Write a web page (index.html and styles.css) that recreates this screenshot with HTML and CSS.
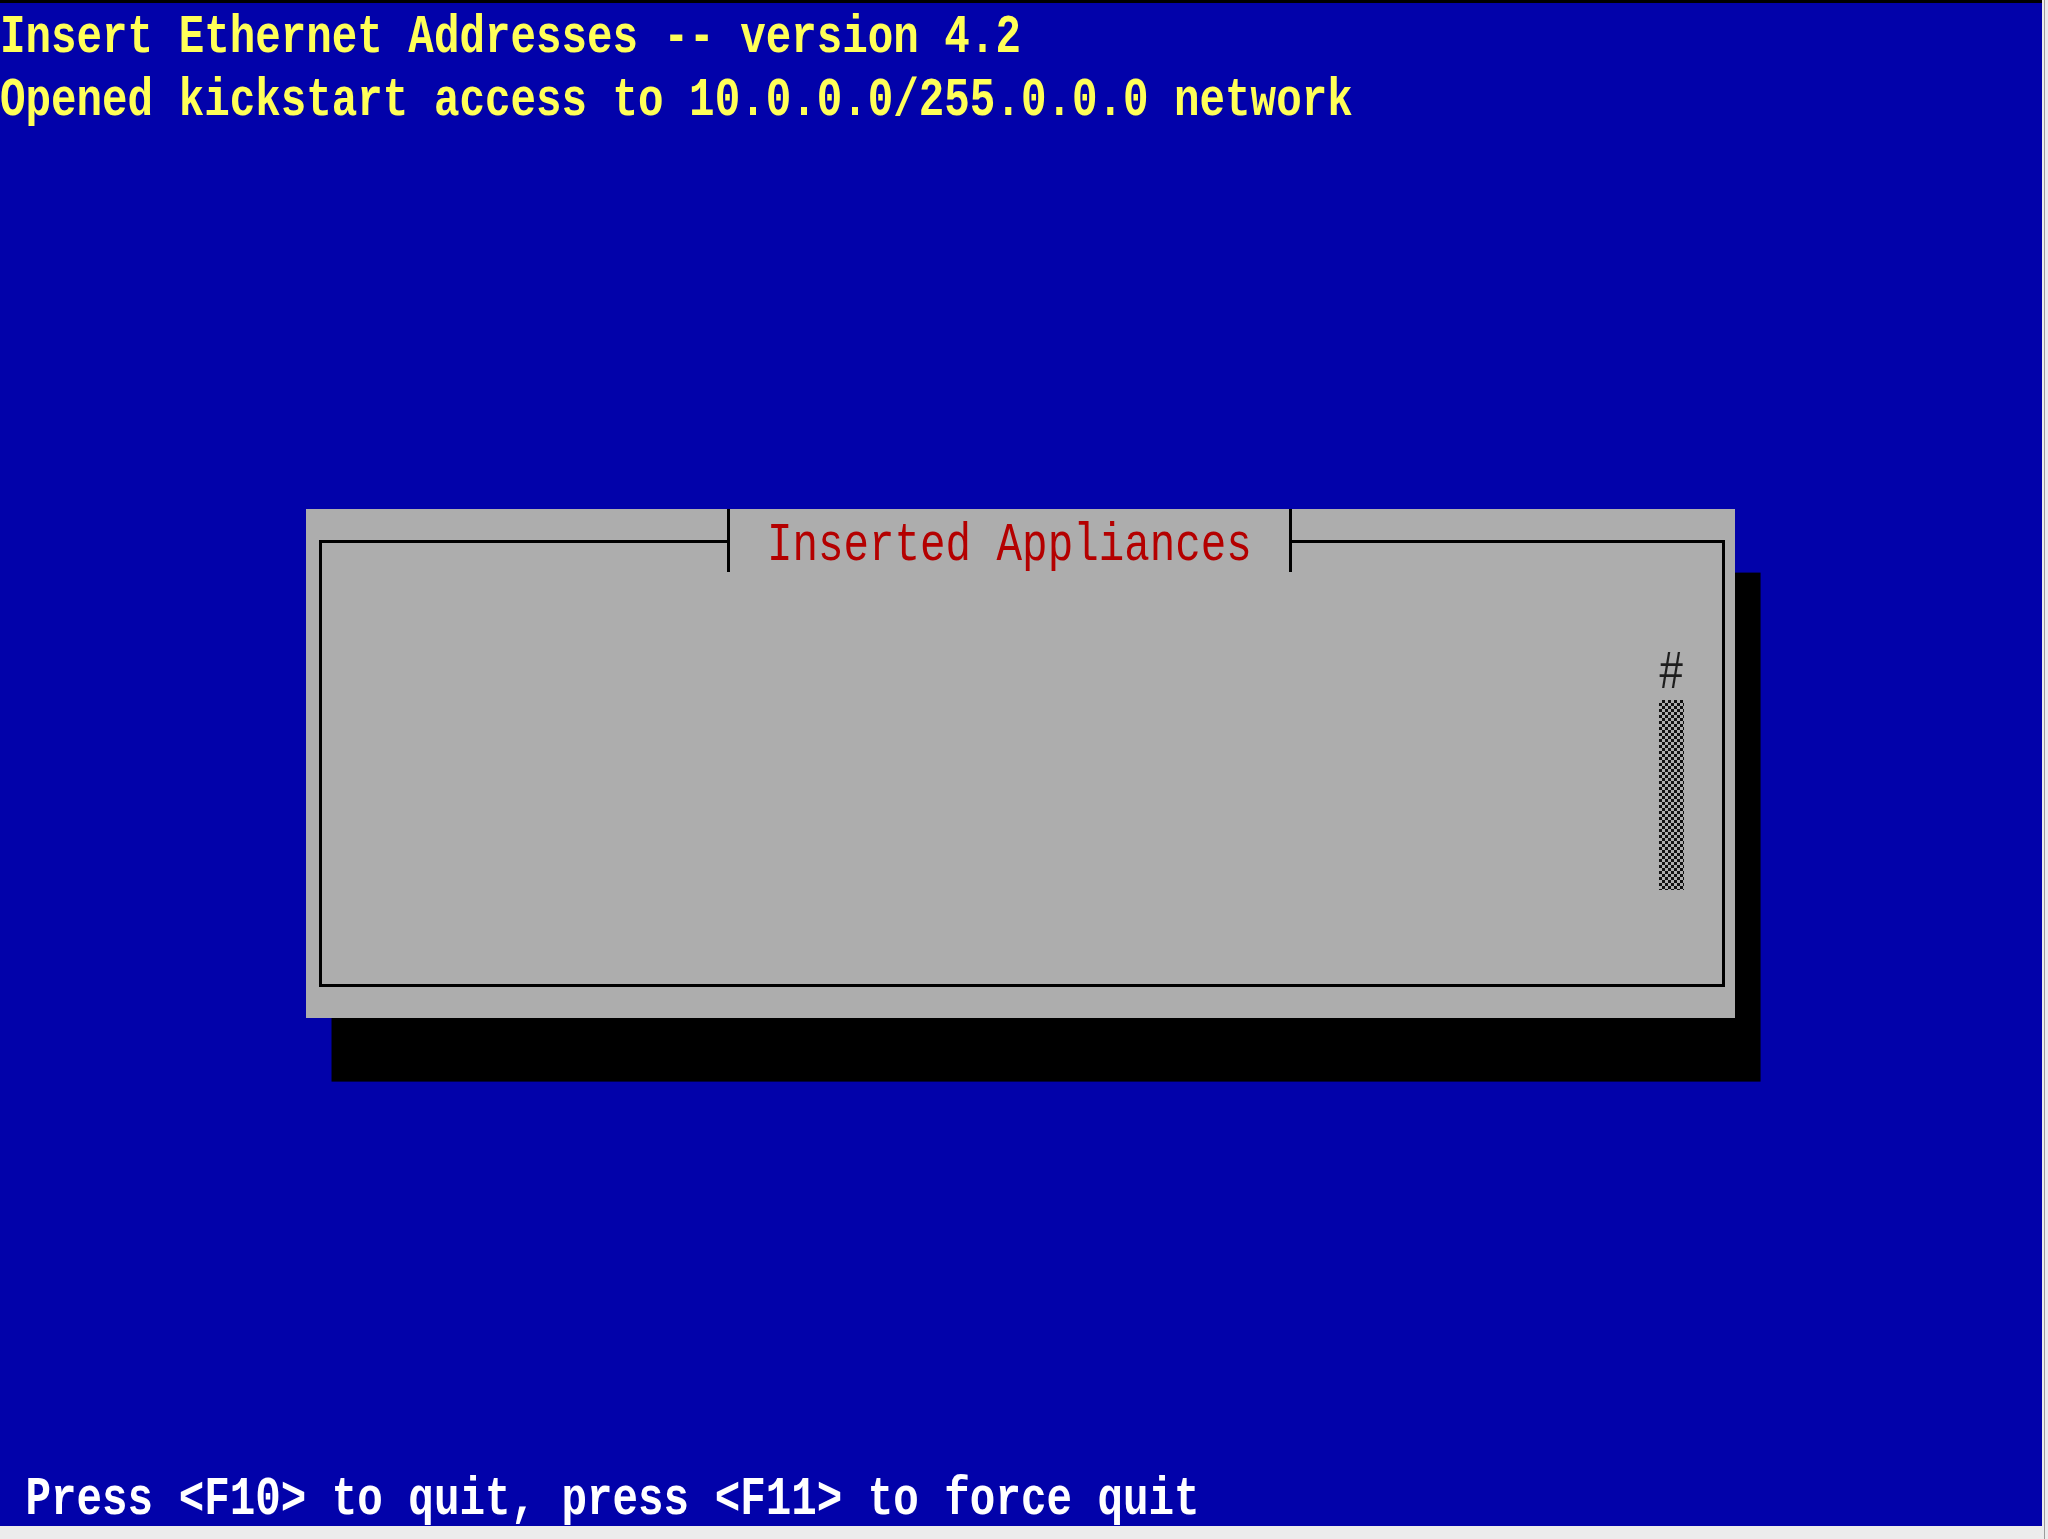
FILE: index.html
```html
<!DOCTYPE html>
<html lang="en">
<head>
    <meta charset="UTF-8">
    <meta name="viewport" content="width=device-width, initial-scale=1.0">
    <title>Insert Ethernet Addresses</title>
    <link rel="stylesheet" href="styles.css">
</head>
<body>
    <div class="frame">
        <div class="screen">
            <!-- header lines -->
            <div class="line top1 txt">Insert Ethernet Addresses -- version 4.2</div>
            <div class="line top2 txt">Opened kickstart access to 10.0.0.0/255.0.0.0 network</div>

            <!-- dialog -->
            <div class="panel">
                <div class="box"></div>
                <div class="title"><span class="txt">Inserted Appliances</span></div>
                <div class="hash txt">#</div>
                <div class="scroll"></div>
            </div>

            <!-- help line -->
            <div class="line help txt">Press &lt;F10&gt; to quit, press &lt;F11&gt; to force quit</div>
        </div>
    </div>
</body>
</html>
```

FILE: styles.css
```css
*,::after,::before{margin: 0; box-sizing: border-box;}
body{margin: 0; background: #ececec;}
.frame{width: 2048px; height: 1539px; background: linear-gradient(to right, transparent 2044px, #9c9c9c 2044px, #9c9c9c 2045px, transparent 2045px), #ececec;}

/* 80x24 text screen */
.screen{width: 2042px; height: 1526px; background: #0202aa; box-shadow: inset 0 3px 0 #000;
    display: grid; grid-template-columns: repeat(80, 25.525px); grid-template-rows: repeat(24, 63.6px);
    font-family: "Liberation Mono", "DejaVu Sans Mono", monospace; font-size: 42.54px; line-height: 63.6px;}
/* glyphs are stretched tall like the console font; baseline kept ~52px into the cell */
.txt{white-space: pre; line-height: 48px; margin-top: 16.7px; align-self: start; transform: scaleY(1.28); transform-origin: 0 35.3px;}
.line{font-weight: bold;}
.top1{grid-row: 1; grid-column: 1 / -1; color: #ffff58;}
.top2{grid-row: 2; grid-column: 1 / -1; color: #ffff58;}
.help{grid-row: 24; grid-column: 2 / -1; color: #fff;}

/* dialog window */
.panel{grid-row: 9 / span 8; grid-column: 13 / span 56; background: #adadad; box-shadow: 25.525px 63.6px 0 #000;
    display: grid; grid-template-columns: repeat(56, 25.525px); grid-template-rows: repeat(8, 63.6px);}
.box{grid-row: 1 / -1; grid-column: 1 / -1; margin: 31.7px 9.7px 30.6px 12.7px; border: 3px solid #000;}
.title{grid-row: 1; grid-column: 17 / 40; margin: 0 9.7px 0 12.7px; border-left: 3px solid #000; border-right: 3px solid #000;
    background: #adadad; color: #b40000; display: flex; justify-content: center; align-items: flex-start;}
.hash{grid-row: 3; grid-column: 54; color: #1e1e1e;}
.scroll{grid-row: 4 / span 3; grid-column: 54; background: repeating-conic-gradient(#111 0 25%, #adadad 0 50%) 0 0 / 6px 6px;}
```
